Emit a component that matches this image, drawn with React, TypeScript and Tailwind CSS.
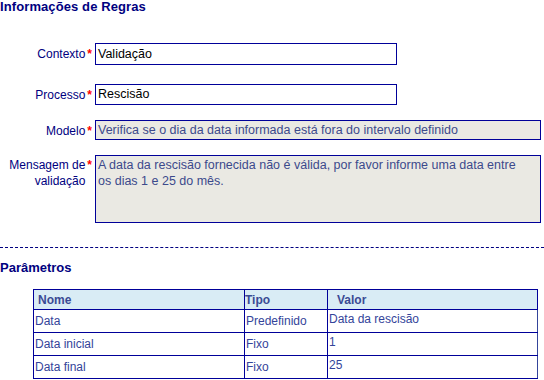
import React from "react";

const font = { fontFamily: '"Liberation Sans", Arial, sans-serif' };

function Label({ children }: { children: React.ReactNode }) {
  return (
    <div className="flex justify-end items-start pr-[3px] text-[12px] leading-[16px] text-[#000080] text-right">
      <span>{children}</span>
      <span className="text-[#ff0000] ml-[2px] font-bold">*</span>
    </div>
  );
}

export default function App() {
  return (
    <div className="w-[544px] h-[380px] bg-white overflow-hidden relative" style={font}>
      <div className="text-[13px] font-bold text-[#000080] leading-[14px] tracking-[0.1px]">Informações de Regras</div>

      <div className="mt-[29px] grid grid-cols-[95px_1fr] items-start">
        <div className="pt-[3px]"><Label>Contexto</Label></div>
        <div className="w-[302px] h-[22px] border border-[#000099] text-[12.5px] leading-[20px] pl-[2px] text-black">Validação</div>

        <div className="pt-[22px]"><Label>Processo</Label></div>
        <div className="mt-[19px] w-[302px] h-[21px] border border-[#000099] text-[12.5px] leading-[19px] pl-[2px] text-black">Rescisão</div>

        <div className="pt-[18px]"><Label>Modelo</Label></div>
        <div className="mt-[15px] w-[446px] h-[20px] border border-[#000099] bg-[#eae9e3] text-[12.5px] leading-[18px] pl-[2px] text-[#3c4a8c]">
          Verifica se o dia da data informada está fora do intervalo definido
        </div>

        <div className="pt-[17px]">
          <div className="flex justify-end items-start pr-[3px] text-[12px] leading-[16px] text-[#000080] text-right">
            <span>Mensagem de<br />validação</span>
            <span className="text-[#ff0000] ml-[2px] font-bold self-start">*</span>
          </div>
        </div>
        <div className="mt-[15px] w-[446px] h-[68px] border border-[#000099] bg-[#eae9e3] text-[12.5px] leading-[16px] pl-[2px] pt-[1px] pr-[20px] text-[#3c4a8c]">
          A data da rescisão fornecida não é válida, por favor informe uma data entre os dias 1 e 25 do mês.
        </div>
      </div>

      <div className="mt-[24px] border-t border-dashed border-[#000080] w-[544px]" />

      <div className="mt-[13px] text-[13px] font-bold text-[#000080] leading-[14px]">Parâmetros</div>

      <table className="mt-[14px] ml-[33px] w-[505px] border-collapse text-[12px] text-[#34449a]">
        <thead>
          <tr className="h-[20px] bg-[#d9ecf5]">
            <th className="w-[211px] border border-[#000099] text-left font-bold pl-[4px] py-0 leading-[14px] text-[#3a4a94]">Nome</th>
            <th className="w-[83px] border border-[#000099] text-left font-bold pl-[0px] py-0 leading-[14px] text-[#3a4a94]">Tipo</th>
            <th className="border border-[#000099] text-left font-bold pl-[9px] py-0 leading-[14px] text-[#3a4a94]">Valor</th>
          </tr>
        </thead>
        <tbody>
          {[
            ["Data", "Predefinido", "Data da rescisão"],
            ["Data inicial", "Fixo", "1"],
            ["Data final", "Fixo", "25"],
          ].map((r) => (
            <tr key={r[0]} className="h-[23px]">
              <td className="border border-[#000099] pl-[1px] py-0 leading-[14px] align-middle">{r[0]}</td>
              <td className="border border-[#000099] pl-[1px] py-0 leading-[14px] align-middle">{r[1]}</td>
              <td className="border border-[#000099] pl-[1px] border-r-[#34449a] leading-[14px] align-top pt-[2px] pb-0">{r[2]}</td>
            </tr>
          ))}
        </tbody>
      </table>
    </div>
  );
}
